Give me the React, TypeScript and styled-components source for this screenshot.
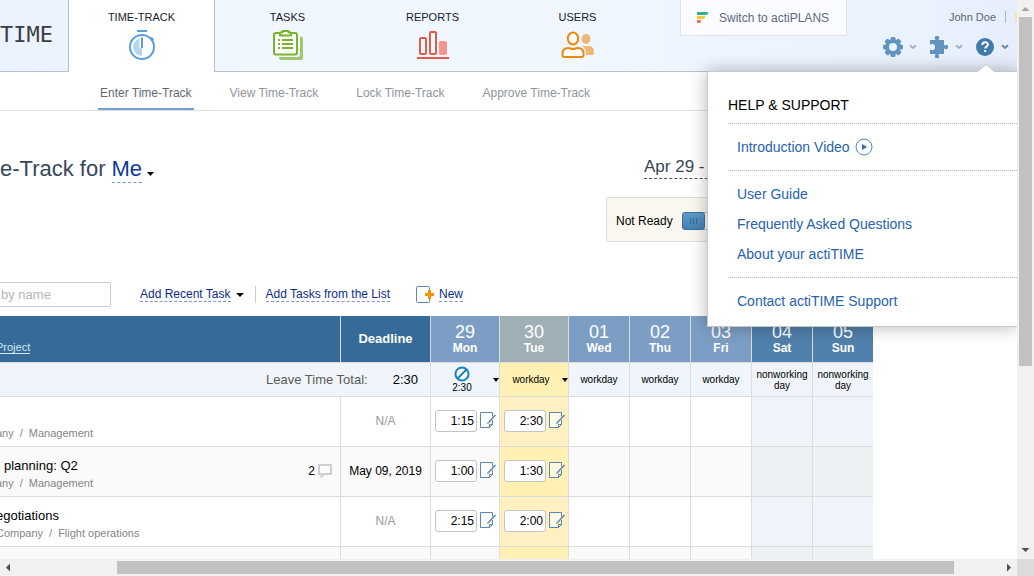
import React from "react";
import styled, { createGlobalStyle, css } from "styled-components";

const GlobalStyle = createGlobalStyle`
  *, *::before { box-sizing: border-box; }
  body {
    margin: 0;
    background: #fff;
    color: #000;
    font: 12px/14px "Liberation Sans", Arial, sans-serif;
  }
  button, input { font: inherit; color: inherit; }
  button { margin: 0; padding: 0; border: 0; background: none; cursor: pointer; }
  a { text-decoration: none; color: inherit; }
  svg { display: block; flex: none; }
`;

/* ---------- window frame ---------- */

const Frame = styled.div`
  display: grid;
  grid-template-columns: minmax(0, 1fr) 17px;
  grid-template-rows: minmax(0, 1fr) 17px;
  height: 100vh;
`;

const Viewport = styled.div`
  position: relative;
  overflow: hidden;
`;

const Scrollbar = styled.div<{ $vertical?: boolean }>`
  display: flex;
  flex-direction: ${(p) => (p.$vertical ? "column" : "row")};
  background: #f1f1f1;
`;

const Thumb = styled.div<{ $size: number; $vertical?: boolean }>`
  flex: ${(p) => p.$size} 0 0;
  margin: ${(p) => (p.$vertical ? "0 2px" : "2px 0")};
  background: #c1c1c1;
`;

const Track = styled.div<{ $size: number }>`
  flex: ${(p) => p.$size} 0 0;
`;

const ScrollCorner = styled.div`
  background: #dcdcdc;
`;

/* ---------- header ---------- */

const Header = styled.header`
  display: flex;
  height: 72px;
  border-bottom: 1px solid #b5c3d0;
  background: linear-gradient(90deg, #eaf2fe 0%, #f1f7ff 25%, #f1f7ff 55%, #eaf2fe 90%, #e6eefb 100%);
`;

const Logo = styled.div`
  width: 69px;
  padding-top: 22px;
  border-right: 1px solid #b5c3d0;
  color: #3a3d42;
  font: 22px/26px "DejaVu Sans Mono", monospace;
`;

const Tabs = styled.nav`
  display: flex;
`;

const Tab = styled.a<{ $active?: boolean }>`
  display: flex;
  flex-direction: column;
  align-items: center;
  gap: 5px;
  box-sizing: content-box;
  width: 145px;
  padding-top: 10px;
  color: #16202c;
  font-size: 11px;
  ${(p) =>
    p.$active &&
    css`
      margin-bottom: -1px;
      border-right: 1px solid #b5c3d0;
      background: #fff;
    `}
`;

const SwitchLink = styled.a`
  display: flex;
  align-items: center;
  gap: 11px;
  height: 36px;
  margin-left: 30px;
  padding: 0 17px 0 16px;
  border: 1px solid #dbe3ec;
  border-top: 0;
  background: #fafcff;
  color: #5b6a7c;
`;

const UserArea = styled.div`
  display: flex;
  flex-direction: column;
  align-items: flex-end;
  gap: 12px;
  margin-left: auto;
  padding-top: 10px;
`;

const UserLine = styled.div`
  display: flex;
  align-items: center;
  gap: 9px;
  color: #5b6675;
  font-size: 11px;
`;

const UserDivider = styled.span`
  width: 1px;
  height: 12px;
  background: #a9b8d6;
`;

const LogoutEdge = styled.span`
  width: 2px;
  height: 10px;
  background: #f6e3b0;
`;

const IconLine = styled.div`
  display: flex;
  gap: 12px;
  padding-right: 8px;
`;

const IconButton = styled.button`
  display: flex;
  align-items: center;
  gap: 6px;
`;

/* ---------- section navigation ---------- */

const SubNav = styled.nav`
  display: flex;
  gap: 34px;
  height: 39px;
  padding-left: 98px;
  border-bottom: 1px solid #dfe1e3;
`;

const SubNavLink = styled.a<{ $active?: boolean }>`
  padding: 14px 2px 0;
  border-bottom: 2px solid ${(p) => (p.$active ? "#74a0cf" : "transparent")};
  color: ${(p) => (p.$active ? "#5f6a75" : "#8f959b")};
`;

/* ---------- page body ---------- */

const Main = styled.main`
  padding-right: 144px;
`;

const Heading = styled.div`
  display: flex;
  justify-content: space-between;
  align-items: flex-start;
  padding-top: 44px;
`;

const TitleLine = styled.div`
  display: flex;
  align-items: center;
  gap: 6px;
`;

const Title = styled.h1`
  margin: 0;
  color: #36475c;
  font-size: 22px;
  font-weight: normal;
  line-height: 28px;
`;

const UserPicker = styled.button`
  display: flex;
  align-items: center;
  gap: 5px;
  color: #0b3a9b;
  font-size: 22px;
  line-height: 27px;

  svg { margin-top: 9px; }
`;

const DashedText = styled.span`
  border-bottom: 1px dashed #7d95d3;
`;

const Period = styled.div`
  flex: 0 0 267px;
`;

const DateButton = styled.button`
  display: block;
  width: 190px;
  margin: 1px 0 18px 38px;
  border-bottom: 1px dashed #45536b;
  color: #36475c;
  font-size: 17px;
  line-height: 22px;
  text-align: left;
`;

const ReadyBox = styled.label`
  display: flex;
  align-items: center;
  gap: 9px;
  height: 45px;
  padding: 3px 9px 0;
  border: 1px solid #dedfda;
  border-radius: 2px;
  background: #f9f7ef;
`;

const Toggle = styled.input`
  appearance: none;
  width: 52px;
  height: 18px;
  margin: 0;
  border: 1px solid #b3b9bf;
  border-radius: 3px;
  background: #fdfdfb;

  &::before {
    content: "";
    display: block;
    width: 23px;
    height: 18px;
    margin: -1px;
    border: 1px solid #3c709f;
    border-radius: 3px;
    background:
      repeating-linear-gradient(90deg, #376b9c 0 1px, transparent 1px 3px) 7px 5px / 7px 6px no-repeat,
      linear-gradient(#5f9aca, #4480b2);
  }
`;

const Toolbar = styled.div`
  display: flex;
  align-items: center;
  margin: 40px 0 9px;
`;

const SearchBox = styled.input`
  width: 111px;
  height: 25px;
  margin-right: 29px;
  padding: 0 0 0 1px;
  border: 1px solid #c3ccd4;
  border-left: 0;
  border-radius: 0 2px 2px 0;
  font-size: 13px;

  &::placeholder { color: #b3b6ba; opacity: 1; }
`;

const ToolButton = styled.button`
  display: flex;
  align-items: center;
  gap: 5px;
  color: #0c2c8a;
  line-height: 14px;
`;

const ToolDivider = styled.span`
  width: 1px;
  height: 17px;
  margin: 0 10px 0 11px;
  background: #c9ced4;
`;

const ToolGap = styled.span`
  width: 26px;
`;

/* ---------- timesheet ---------- */

type Tone = "plain" | "today" | "off";

const Sheet = styled.table`
  width: 100%;
  table-layout: fixed;
  border-collapse: separate;
  border-spacing: 0;

  th, td {
    padding: 0;
    border: 0 solid #dcdcdc;
    border-width: 0 1px 1px 0;
  }
  tbody td { padding-bottom: 2px; }
  th:last-child, td:last-child { border-right: 0; }
`;

const Col = styled.col<{ $w?: number }>`
  ${(p) => p.$w && `width: ${p.$w}px;`}
`;

const HeadCell = styled.th<{ $kind: "main" | "work" | "today" | "off" }>`
  height: 47px;
  color: #fff;
  font-size: 13px;
  background: ${(p) => ({ main: "#366b99", work: "#7d9ec4", today: "#9fafb5", off: "#5081ac" })[p.$kind]};
`;

const ProjectHead = styled(HeadCell)`
  vertical-align: bottom;
  text-align: left;
`;

const ProjectSort = styled.button`
  display: block;
  margin: 0 0 8px -4px;
  border-bottom: 1px solid #d5e6f5;
  color: #d5e6f5;
  font-size: 11px;
  font-weight: normal;
  line-height: 12px;
`;

const DayNumber = styled.div`
  font-size: 18px;
  font-weight: normal;
  line-height: 18px;
`;

const DayName = styled.div`
  font-size: 12px;
  line-height: 14px;
`;

const LeaveTotal = styled.td`
  height: 34px;
  background: #eff5fa;
  font-size: 13px;
  text-align: right;
`;

const LeaveLine = styled.div`
  display: flex;
  justify-content: flex-end;
  gap: 25px;
  padding-right: 12px;
`;

const LeaveLabel = styled.span`
  color: #5c5c54;
`;

const DayType = styled.td<{ $tone: Tone }>`
  height: 34px;
  background: ${(p) => ({ plain: "#eff5fa", today: "#fff1b3", off: "#f0f3fa" })[p.$tone]};
  font-size: 10px;
  line-height: 11px;
  text-align: center;
`;

const DayTypeButton = styled.button`
  display: flex;
  align-items: center;
  width: 100%;
`;

const DayTypeLabel = styled.span`
  display: flex;
  flex: 1;
  flex-direction: column;
  align-items: center;
`;

const BodyRow = styled.tr`
  --row: #fff;
  --today: #fff0c2;
  --off: #f0f3f9;
  &:nth-child(even) {
    --row: #fafafa;
    --today: #fff0b3;
    --off: #edf1f4;
  }
`;

const BodyCell = styled.td<{ $tone?: Tone }>`
  height: 50px;
  background: var(--${(p) => (p.$tone === "today" ? "today" : p.$tone === "off" ? "off" : "row")});
  text-align: center;
`;

const TaskLine = styled.div`
  display: flex;
  align-items: center;
  justify-content: space-between;
  padding-right: 8px;
`;

const TaskText = styled.div`
  display: flex;
  flex-direction: column;
  gap: 2px;
  margin-left: -4px;
  padding-top: 6px;
  text-align: left;
`;

const TaskName = styled.div<{ $inset?: boolean }>`
  height: 16px;
  padding-left: ${(p) => (p.$inset ? 8 : 0)}px;
  font-size: 13px;
  line-height: 16px;
`;

const Trail = styled.div`
  display: flex;
  gap: 6px;
  color: #858585;
  font-size: 11px;
  line-height: 14px;
`;

const Comments = styled.button`
  display: flex;
  align-items: center;
  gap: 3px;
`;

const Deadline = styled.span<{ $muted?: boolean }>`
  color: ${(p) => (p.$muted ? "#999" : "#000")};
`;

const Entry = styled.div`
  display: flex;
  align-items: center;
  gap: 3px;
  padding-left: 4px;
`;

const TimeInput = styled.input`
  width: 42px;
  height: 22px;
  padding: 0 2px;
  border: 1px solid #c3c3c3;
  border-radius: 3px;
  background: #fff;
  text-align: right;
`;

/* ---------- help menu ---------- */

const HelpMenu = styled.aside`
  position: absolute;
  top: 71px;
  right: 0;
  width: 310px;
  padding: 23px 0 10px 20px;
  border: 1px solid #c5c8cb;
  border-right: 0;
  background: #fff;
  box-shadow: 0 0 16px rgba(0, 0, 0, 0.3);
`;

const MenuPointer = styled.svg`
  position: absolute;
  top: -8px;
  right: 22px;
`;

const MenuTitle = styled.h2`
  margin: 0 0 8px;
  font-size: 14px;
  font-weight: normal;
  line-height: 20px;
`;

const MenuGroup = styled.div`
  padding: 8px 0 8px 9px;
  border-top: 1px dotted #b0b5ba;

  &:last-child { padding-bottom: 0; }
`;

const MenuLink = styled.a`
  display: flex;
  align-items: center;
  gap: 5px;
  color: #2763ad;
  font-size: 14px;
  line-height: 30px;
`;

/* ---------- drawings ---------- */

const Caret = ({ width = 7 }: { width?: number }) => (
  <svg width={width} height="4" viewBox="0 0 8 4" preserveAspectRatio="none">
    <path d="M0 0h8L4 4z" fill="#000" />
  </svg>
);

const Chevron = ({ color = "#a5b2c2" }: { color?: string }) => (
  <svg width="8" height="6" viewBox="0 0 8 6">
    <path d="M1 1.2l3 2.8 3-2.8" fill="none" stroke={color} strokeWidth="2" />
  </svg>
);

const Arrow = ({ d, color = "#505050" }: { d: string; color?: string }) => (
  <svg width="17" height="17" viewBox="0 0 17 17">
    <path d={d} fill={color} />
  </svg>
);

const TimerIcon = () => (
  <svg width="33" height="32" viewBox="0 0 33 32">
    <path d="M12 2h10" stroke="#5a9fd8" strokeWidth="2" />
    <circle cx="17" cy="18" r="12" fill="#fff" stroke="#5a9fd8" strokeWidth="2" />
    <path d="M26 8.5l2.500 2.500" stroke="#5a9fd8" strokeWidth="2" />
    <path d="M17 9v18a9 9 0 0 1 0-18z" fill="#b9d4ef" />
    <path d="M17 8v11" stroke="#fff" strokeWidth="5" />
    <path d="M17 8.500v10.500" stroke="#5a9fd8" strokeWidth="2" />
  </svg>
);

const TasksIcon = () => (
  <svg width="33" height="32" viewBox="0 0 33 32">
    <path d="M29 7.500h1a2 2 0 0 1 2 2V29a2 2 0 0 1-2 2H10a2 2 0 0 1-2-2v-1h19a2 2 0 0 0 2-2z" fill="#a1c66b" />
    <rect x="3" y="4" width="23" height="21.500" rx="2" fill="#fff" stroke="#76b52c" strokeWidth="2" />
    <path d="M9 3.500h2.500V2h6v1.500H20v3H9z" fill="#fff" stroke="#76b52c" strokeWidth="2" strokeLinejoin="round" />
    <path d="M7 11h2m2 0h11M7 15h2m2 0h11M7 19h2m2 0h11" stroke="#76b52c" strokeWidth="2" />
  </svg>
);

const ReportsIcon = () => (
  <svg width="33" height="32" viewBox="0 0 33 32">
    <rect x="4" y="9" width="6" height="16" rx="1" fill="#fff" stroke="#e8594a" strokeWidth="2" />
    <rect x="14" y="3" width="6" height="22" rx="1" fill="#fff" stroke="#e8594a" strokeWidth="2" />
    <rect x="23" y="12" width="8" height="14" rx="2" fill="#f6968d" />
    <path d="M1 29h32" stroke="#e8594a" strokeWidth="2" />
  </svg>
);

const UsersIcon = () => (
  <svg width="33" height="32" viewBox="0 0 33 32">
    <ellipse cx="25" cy="10" rx="4.500" ry="5" fill="#efb677" />
    <path d="M21 17h7a5 5 0 0 1 5 5v2a2 2 0 0 1-2 2h-6c0-5-1-7-4-9z" fill="#efb677" />
    <ellipse cx="12" cy="9.500" rx="5.200" ry="6" fill="#fff" stroke="#ee870d" strokeWidth="2" />
    <path d="M7.500 19c1.500 0 2.500 1 4.500 1s3-1 4.500-1c3.500 0 6 2 6 5.500V26a2 2 0 0 1-2 2h-17a2 2 0 0 1-2-2v-1.500C1.500 21 4 19 7.500 19z" fill="#fff" stroke="#ee870d" strokeWidth="2" />
  </svg>
);

const PlansLogo = () => (
  <svg width="11" height="12" viewBox="0 0 11 12">
    <path d="M0 0h11v1a2 2 0 0 1-2 2H0z" fill="#35b37e" />
    <path d="M0 4h8v1a2 2 0 0 1-2 2H0z" fill="#fcc72c" />
    <path d="M0 8h4v1a2 2 0 0 1-2 2H0z" fill="#f16e6b" />
  </svg>
);

const GearIcon = () => (
  <svg width="20" height="20" viewBox="0 0 20 20">
    <g fill="#6193c1">
      {[0, 45, 90, 135].map((angle) => (
        <rect key={angle} x="7.500" y="0" width="5" height="20" rx="1.500" transform={`rotate(${angle} 10 10)`} />
      ))}
      <circle cx="10" cy="10" r="7.800" />
    </g>
    <circle cx="10" cy="10" r="4" fill="#eaf2fd" />
  </svg>
);

const PuzzleIcon = () => (
  <svg width="20" height="22" viewBox="0 0 20 22">
    <path
      d="M1 4h5.500c0-1-.8-1.300-.8-2.300A2 2 0 0 1 8 0a2 2 0 0 1 2.300 1.700c0 1-.8 1.300-.8 2.300H15v5.500c1 0 1.300-.8 2.300-.8A2 2 0 0 1 19 11a2 2 0 0 1-1.700 2.300c-1 0-1.300-.8-2.300-.8V18H9.500c0 1 .8 1.300.8 2.300A2 2 0 0 1 8 22a2 2 0 0 1-2.300-1.700c0-1 .8-1.300.8-2.300H1v-4.500c1 0 1.500.8 2.700.8A3 3 0 0 0 6 11a3 3 0 0 0-2.300-3.300c-1.200 0-1.700.8-2.700.8z"
      fill="#6193c1"
    />
  </svg>
);

const HelpIcon = () => (
  <svg width="20" height="20" viewBox="0 0 20 20">
    <circle cx="10" cy="10" r="9" fill="#4279ab" />
    <path d="M7.300 8c0-3.700 5.600-3.600 5.600-.4 0 2-2.700 2-2.700 4" fill="none" stroke="#fff" strokeWidth="2" />
    <path d="M9.200 13h2v2h-2z" fill="#fff" />
  </svg>
);

const PlayIcon = () => (
  <svg width="18" height="18" viewBox="0 0 18 18">
    <circle cx="9" cy="9" r="8" fill="#fff" stroke="#5584b8" />
    <path d="M7 6l5 3-5 3z" fill="#2f6cae" />
  </svg>
);

const NewTaskIcon = () => (
  <svg width="18" height="17" viewBox="0 0 18 17">
    <path d="M13.500 4V1.500a1 1 0 0 0-1-1h-11a1 1 0 0 0-1 1v14a1 1 0 0 0 1 1h11a1 1 0 0 0 1-1V13" fill="#fff" stroke="#5b87b0" />
    <path d="M9 8.500h9M13.500 4v9" stroke="#f59300" strokeWidth="3" />
  </svg>
);

const NoteIcon = () => (
  <svg width="16" height="17" viewBox="0 0 16 17">
    <path d="M12.500 4.500V.5H.5v15h9l3-3V8" fill="#fff" fillOpacity="0.6" stroke="#5b87b0" />
    <path d="M9.500 15.500v-3h3z" fill="#fff" stroke="#5b87b0" />
    <path d="M15.500 3L8.500 10.500" stroke="#5b87b0" strokeWidth="1.500" />
    <path d="M7 12l.8-2.200 1.500 1.500z" fill="#5b87b0" />
  </svg>
);

const CommentIcon = () => (
  <svg width="14" height="14" viewBox="0 0 14 14">
    <path d="M1 1h12v9H6l-2.500 2.500V10H1z" fill="none" stroke="#cfcfcf" strokeWidth="2" />
  </svg>
);

const LeaveIcon = () => (
  <svg width="16" height="16" viewBox="0 0 16 16">
    <circle cx="8" cy="8" r="6.500" fill="#fff" stroke="#1580c2" strokeWidth="2" />
    <path d="M3.500 12.500l9-9" stroke="#1580c2" strokeWidth="2" />
  </svg>
);

/* ---------- data ---------- */

const tabs = [
  { label: "TIME-TRACK", Icon: TimerIcon },
  { label: "TASKS", Icon: TasksIcon },
  { label: "REPORTS", Icon: ReportsIcon },
  { label: "USERS", Icon: UsersIcon },
];

const sections = ["Enter Time-Track", "View Time-Track", "Lock Time-Track", "Approve Time-Track"];

const days: { number: string; name: string; kind: "work" | "today" | "off" }[] = [
  { number: "29", name: "Mon", kind: "work" },
  { number: "30", name: "Tue", kind: "today" },
  { number: "01", name: "Wed", kind: "work" },
  { number: "02", name: "Thu", kind: "work" },
  { number: "03", name: "Fri", kind: "work" },
  { number: "04", name: "Sat", kind: "off" },
  { number: "05", name: "Sun", kind: "off" },
];

const tasks = [
  { name: "", trail: ["any", "Management"], comments: 0, deadline: "N/A", times: ["1:15", "2:30"] },
  { name: "planning: Q2", inset: true, trail: ["any", "Management"], comments: 2, deadline: "May 09, 2019", times: ["1:00", "1:30"] },
  { name: "egotiations", trail: ["Company", "Flight operations"], comments: 0, deadline: "N/A", times: ["2:15", "2:00"] },
];

const toneOf = (kind: string): Tone => (kind === "work" ? "plain" : (kind as Tone));

export default function App() {
  return (
    <>
      <GlobalStyle />
      <Frame>
        <Viewport>
          <Header>
            <Logo>TIME</Logo>
            <Tabs>
              {tabs.map(({ label, Icon }, i) => (
                <Tab key={label} href="#" $active={i === 0}>
                  {label}
                  <Icon />
                </Tab>
              ))}
            </Tabs>
            <SwitchLink href="#">
              <PlansLogo />
              Switch to actiPLANS
            </SwitchLink>
            <UserArea>
              <UserLine>
                <a href="#">John Doe</a>
                <UserDivider />
                <LogoutEdge />
              </UserLine>
              <IconLine>
                <IconButton aria-label="Settings">
                  <GearIcon />
                  <Chevron />
                </IconButton>
                <IconButton aria-label="Integrations">
                  <PuzzleIcon />
                  <Chevron />
                </IconButton>
                <IconButton aria-label="Help" aria-expanded="true">
                  <HelpIcon />
                  <Chevron color="#76859a" />
                </IconButton>
              </IconLine>
            </UserArea>
          </Header>

          <SubNav>
            {sections.map((section, i) => (
              <SubNavLink key={section} href="#" $active={i === 0}>
                {section}
              </SubNavLink>
            ))}
          </SubNav>

          <Main>
            <Heading>
              <TitleLine>
                <Title>e-Track for</Title>
                <UserPicker>
                  <DashedText>Me</DashedText>
                  <Caret />
                </UserPicker>
              </TitleLine>
              <Period>
                <DateButton>Apr 29 -</DateButton>
                <ReadyBox>
                  Not Ready
                  <Toggle type="checkbox" />
                </ReadyBox>
              </Period>
            </Heading>

            <Toolbar>
              <SearchBox type="text" placeholder="by name" aria-label="Find by name" />
              <ToolButton>
                <DashedText>Add Recent Task</DashedText>
                <Caret width={8} />
              </ToolButton>
              <ToolDivider />
              <ToolButton>
                <DashedText>Add Tasks from the List</DashedText>
              </ToolButton>
              <ToolGap />
              <ToolButton>
                <NewTaskIcon />
                <DashedText>New</DashedText>
              </ToolButton>
            </Toolbar>

            <Sheet>
              <colgroup>
                <Col />
                <Col $w={90} />
                <Col $w={69} />
                <Col $w={69} />
                <Col $w={61} />
                <Col $w={61} />
                <Col $w={61} />
                <Col $w={61} />
                <Col $w={60} />
              </colgroup>
              <thead>
                <tr>
                  <ProjectHead $kind="main">
                    <ProjectSort>Project</ProjectSort>
                  </ProjectHead>
                  <HeadCell $kind="main">Deadline</HeadCell>
                  {days.map((day) => (
                    <HeadCell key={day.number} $kind={day.kind}>
                      <DayNumber>{day.number}</DayNumber>
                      <DayName>{day.name}</DayName>
                    </HeadCell>
                  ))}
                </tr>
                <tr>
                  <LeaveTotal colSpan={2}>
                    <LeaveLine>
                      <LeaveLabel>Leave Time Total:</LeaveLabel>
                      <span>2:30</span>
                    </LeaveLine>
                  </LeaveTotal>
                  <DayType $tone="plain">
                    <DayTypeButton>
                      <DayTypeLabel>
                        <LeaveIcon />
                        2:30
                      </DayTypeLabel>
                      <Caret width={6} />
                    </DayTypeButton>
                  </DayType>
                  <DayType $tone="today">
                    <DayTypeButton>
                      <DayTypeLabel>workday</DayTypeLabel>
                      <Caret width={6} />
                    </DayTypeButton>
                  </DayType>
                  {days.slice(2).map((day) => (
                    <DayType key={day.number} $tone={toneOf(day.kind)}>
                      {day.kind === "off" ? "nonworking day" : "workday"}
                    </DayType>
                  ))}
                </tr>
              </thead>
              <tbody>
                {tasks.map((task, row) => (
                  <BodyRow key={row}>
                    <BodyCell>
                      <TaskLine>
                        <TaskText>
                          <TaskName $inset={task.inset}>{task.name}</TaskName>
                          <Trail>
                            <span>{task.trail[0]}</span>
                            <span>/</span>
                            <span>{task.trail[1]}</span>
                          </Trail>
                        </TaskText>
                        {task.comments > 0 && (
                          <Comments aria-label="Comments">
                            {task.comments}
                            <CommentIcon />
                          </Comments>
                        )}
                      </TaskLine>
                    </BodyCell>
                    <BodyCell>
                      <Deadline $muted={task.deadline === "N/A"}>{task.deadline}</Deadline>
                    </BodyCell>
                    {days.map((day, i) => (
                      <BodyCell key={day.number} $tone={toneOf(day.kind)}>
                        {task.times[i] && (
                          <Entry>
                            <TimeInput defaultValue={task.times[i]} aria-label={`Time for ${day.name}`} />
                            <button aria-label="Add note">
                              <NoteIcon />
                            </button>
                          </Entry>
                        )}
                      </BodyCell>
                    ))}
                  </BodyRow>
                ))}
                <BodyRow>
                  <BodyCell />
                  <BodyCell />
                  {days.map((day) => (
                    <BodyCell key={day.number} $tone={toneOf(day.kind)} />
                  ))}
                </BodyRow>
              </tbody>
            </Sheet>
          </Main>

          <HelpMenu>
            <MenuPointer width="18" height="9" viewBox="0 0 18 9">
              <path d="M0 9l1-1.500 8-7 8 7L18 9z" fill="#fff" />
              <path d="M.5 7.500L9 .500l8.500 7" fill="none" stroke="#c5c8cb" />
            </MenuPointer>
            <MenuTitle>HELP &amp; SUPPORT</MenuTitle>
            <MenuGroup>
              <MenuLink href="#">
                Introduction Video
                <PlayIcon />
              </MenuLink>
            </MenuGroup>
            <MenuGroup>
              <MenuLink href="#">User Guide</MenuLink>
              <MenuLink href="#">Frequently Asked Questions</MenuLink>
              <MenuLink href="#">About your actiTIME</MenuLink>
            </MenuGroup>
            <MenuGroup>
              <MenuLink href="#">Contact actiTIME Support</MenuLink>
            </MenuGroup>
          </HelpMenu>
        </Viewport>

        <Scrollbar $vertical>
          <Arrow d="M4.500 11h8l-4-4z" color="#a3a3a3" />
          <Thumb $vertical $size={349} />
          <Track $size={176} />
          <Arrow d="M4.500 6h8l-4 4z" />
        </Scrollbar>
        <Scrollbar>
          <Arrow d="M10 4.500v8l-4-4z" />
          <Track $size={100} />
          <Thumb $size={837} />
          <Track $size={46} />
          <Arrow d="M7 4.500v8l4-4z" />
        </Scrollbar>
        <ScrollCorner />
      </Frame>
    </>
  );
}
